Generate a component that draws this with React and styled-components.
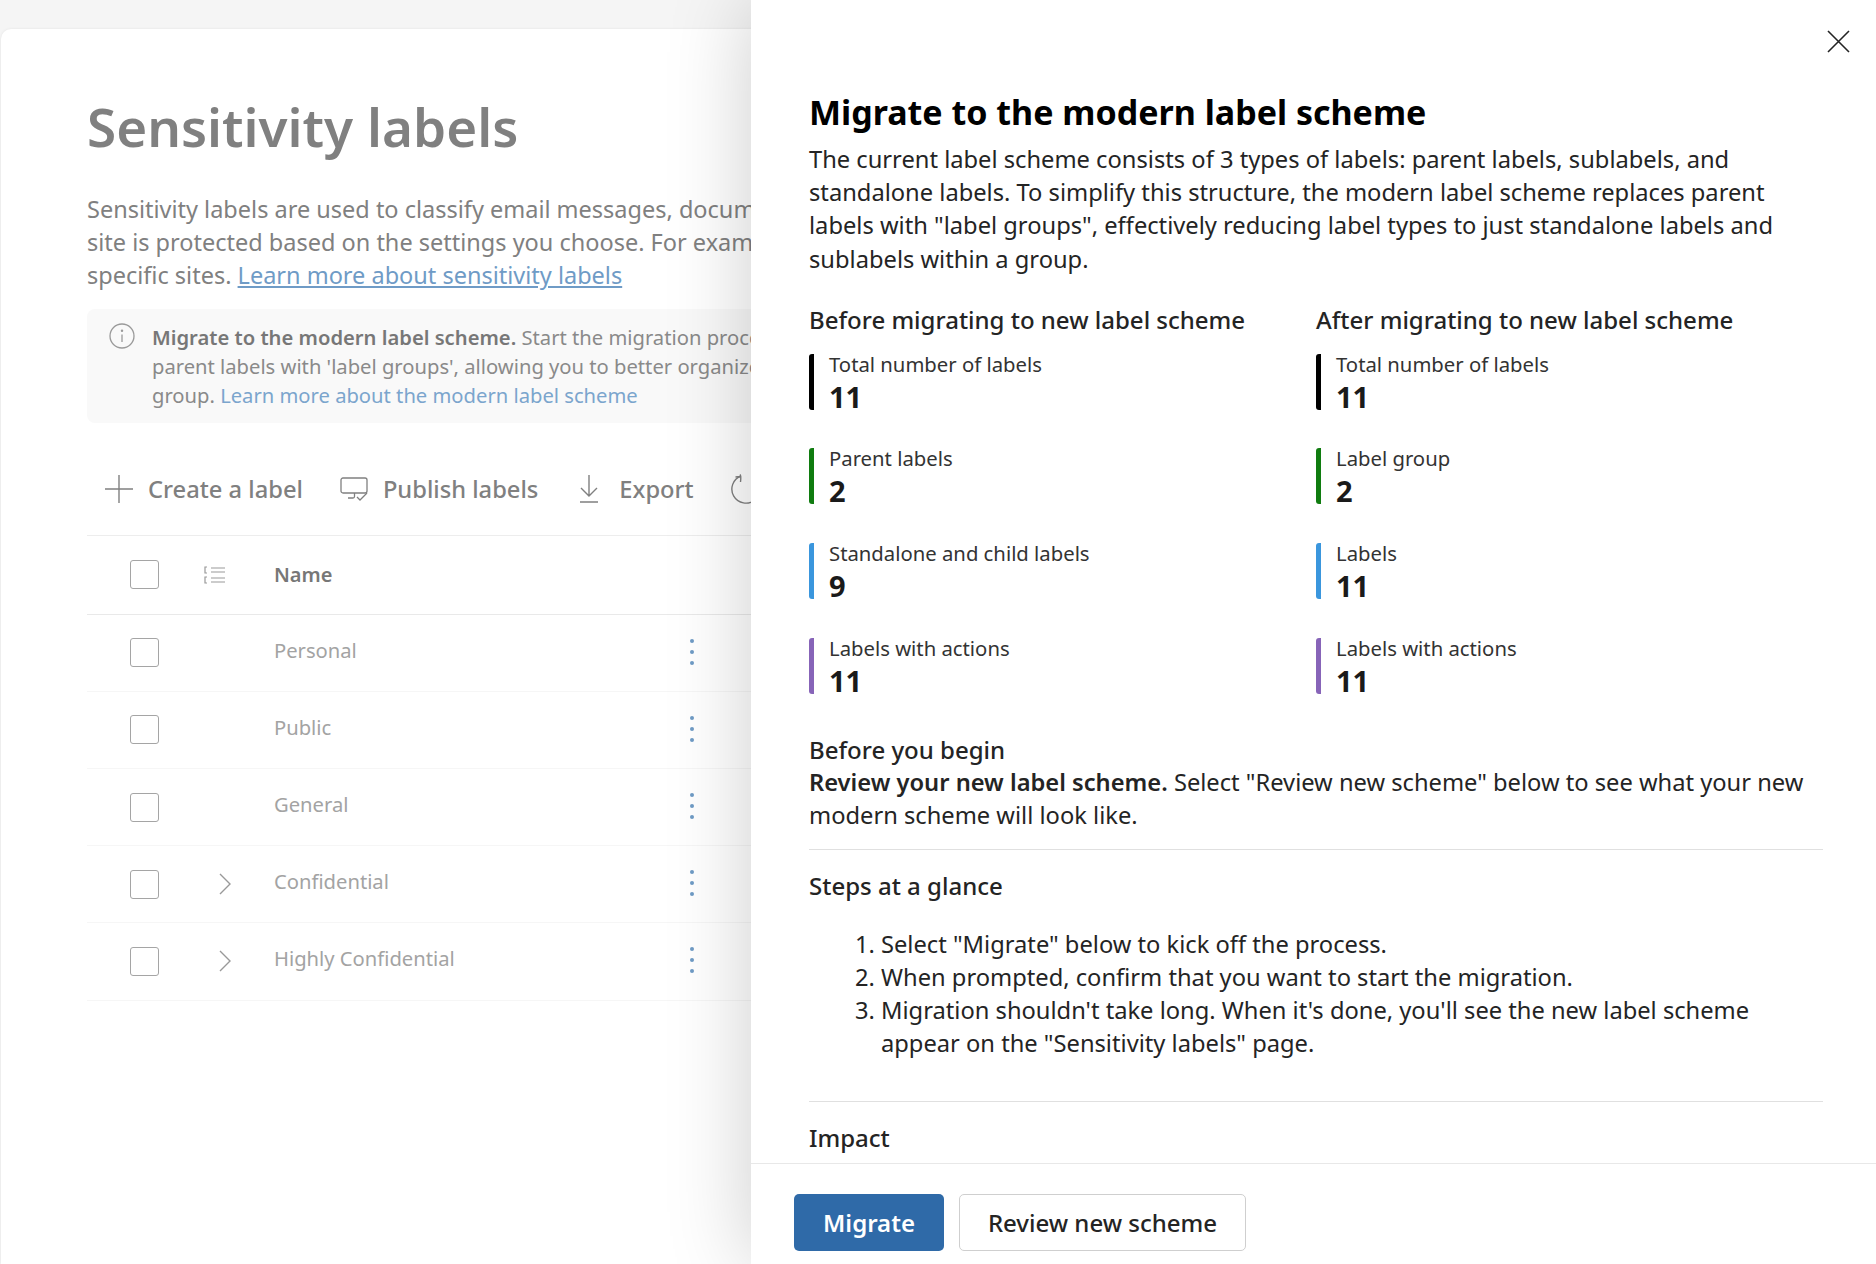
import React from 'react'
import styled, { createGlobalStyle } from 'styled-components'

const GlobalStyle = createGlobalStyle`
  html, body, #root { margin: 0; height: 100%; }
  body { background: #f5f5f5; font-family: "Noto Sans", "Open Sans", sans-serif; overflow: hidden; }
  * { box-sizing: border-box; }
`

const labelRows = [
  { name: 'Personal' },
  { name: 'Public' },
  { name: 'General' },
  { name: 'Confidential', expandable: true },
  { name: 'Highly Confidential', expandable: true },
]

const beforeStats = [
  { label: 'Total number of labels', value: 11, color: '#000000' },
  { label: 'Parent labels', value: 2, color: '#107c10' },
  { label: 'Standalone and child labels', value: 9, color: '#3a96dd' },
  { label: 'Labels with actions', value: 11, color: '#8764b8' },
]

const afterStats = [
  { label: 'Total number of labels', value: 11, color: '#000000' },
  { label: 'Label group', value: 2, color: '#107c10' },
  { label: 'Labels', value: 11, color: '#3a96dd' },
  { label: 'Labels with actions', value: 11, color: '#8764b8' },
]

const Stroke = ({ w, h, children, sw = 1.4 }) => (
  <svg width={w} height={h} viewBox={`0 0 ${w} ${h}`} fill="none" stroke="currentColor" strokeWidth={sw}>
    {children}
  </svg>
)

const App = () => (
  <>
    <GlobalStyle />
    <Page>
      <Behind>
        <Card>
          <Title>Sensitivity labels</Title>
          <Description>
            Sensitivity labels are used to classify email messages, documents<br />
            site is protected based on the settings you choose. For example<br />
            specific sites. <DescLink>Learn more about sensitivity labels</DescLink>
          </Description>
          <InfoBox>
            <InfoIcon>
              <Stroke w={26} h={26} sw={1.3}>
                <circle cx="13" cy="13" r="12" />
                <path d="M13 11.5v7.5" />
                <circle cx="13" cy="7.8" r="0.6" />
              </Stroke>
            </InfoIcon>
            <InfoText>
              <strong>Migrate to the modern label scheme.</strong> Start the migration process<br />
              parent labels with 'label groups', allowing you to better organize<br />
              group. <InfoLink>Learn more about the modern label scheme</InfoLink>
            </InfoText>
          </InfoBox>
          <Toolbar>
            <ToolButton>
              <Stroke w={28} h={28}><path d="M14 0v28M0 14h28" /></Stroke>
              Create a label
            </ToolButton>
            <ToolButton>
              <Stroke w={28} h={24} sw={1.3}>
                <rect x="1" y="1" width="26" height="15" rx="2" />
                <path d="M8 21h5c1 0 1.500-.8 1.500-1.500V16" />
                <path d="M17 20l3 3 7-7" />
              </Stroke>
              Publish labels
            </ToolButton>
            <ToolButton $gap={20} $lead={4}>
              <Stroke w={20} h={28}>
                <path d="M10 0v21M2 13l8 8 8-8M1 27h18" />
              </Stroke>
              Export
            </ToolButton>
            <RefreshIcon>
              <Stroke w={30} h={30}>
                <path d="M24 4.500A14 14 0 1 1 10 2" />
                <path d="M9 0.500c1 1.500 1 4 .5 7.500M9.500 2.500l-5 .5" />
              </Stroke>
            </RefreshIcon>
          </Toolbar>
          <HeaderRow>
            <CheckBox />
            <IconCell $offset={45}>
              <Stroke w={21} h={18} sw={1.2}>
                <path d="M7 2h14M7 6h14M7 12h14M7 16h14M3 1H1v6h2M3 11H1v6h2" />
              </Stroke>
            </IconCell>
            <HeaderName>Name</HeaderName>
          </HeaderRow>
          {labelRows.map((row) => (
            <LabelRow key={row.name}>
              <CheckBox />
              <IconCell $offset={60}>
                {row.expandable && (
                  <Stroke w={12} h={22} sw={1.4}>
                    <path d="M1 1l10 10L1 21" />
                  </Stroke>
                )}
              </IconCell>
              <RowName>{row.name}</RowName>
              <MoreDots><i /><i /><i /></MoreDots>
            </LabelRow>
          ))}
        </Card>
      </Behind>

      <Panel>
        <CloseButton aria-label="Close">
          <svg width="23" height="23" viewBox="0 0 23 23" fill="none" stroke="currentColor" strokeWidth="1.6">
            <path d="M1 1l21 21M22 1L1 22" />
          </svg>
        </CloseButton>
        <PanelBody>
          <PanelTitle>Migrate to the modern label scheme</PanelTitle>
          <Intro>
            The current label scheme consists of 3 types of labels: parent labels, sublabels, and standalone labels. To simplify this structure, the modern label scheme replaces parent labels with "label groups", effectively reducing label types to just standalone labels and sublabels within a group.
          </Intro>
          <Columns>
            <StatColumn heading="Before migrating to new label scheme" stats={beforeStats} />
            <StatColumn heading="After migrating to new label scheme" stats={afterStats} />
          </Columns>
          <BeginBlock>
            <SectionHead>Before you begin</SectionHead>
            <BodyText>
              <b>Review your new label scheme.</b> Select "Review new scheme" below to see what your new modern scheme will look like.
            </BodyText>
          </BeginBlock>
          <Divider />
          <SectionHead>Steps at a glance</SectionHead>
          <Steps>
            <li>Select "Migrate" below to kick off the process.</li>
            <li>When prompted, confirm that you want to start the migration.</li>
            <li>Migration shouldn't take long. When it's done, you'll see the new label scheme appear on the "Sensitivity labels" page.</li>
          </Steps>
          <Divider $gap={41} />
          <SectionHead>Impact</SectionHead>
        </PanelBody>
        <Footer>
          <PrimaryButton>Migrate</PrimaryButton>
          <SecondaryButton>Review new scheme</SecondaryButton>
        </Footer>
      </Panel>
    </Page>
  </>
)

const StatColumn = ({ heading, stats }) => (
  <div>
    <ColumnHead>{heading}</ColumnHead>
    <StatList>
      {stats.map((s) => (
        <Stat key={s.label} $color={s.color}>
          <StatLabel>{s.label}</StatLabel>
          <StatValue>{s.value}</StatValue>
        </Stat>
      ))}
    </StatList>
  </div>
)

export default App

const Page = styled.div`
  display: flex;
  width: 1876px;
  height: 1264px;
  overflow: hidden;
`
const Behind = styled.div`
  flex: 1;
  min-width: 0;
  overflow: hidden;
  padding: 29px 0 0 1px;
`
const Card = styled.div`
  width: 1000px;
  height: 100%;
  padding: 66px 0 0 86px;
  background: #fff;
  border-radius: 10px 0 0 0;
  box-shadow: 0 0 3px rgba(0, 0, 0, 0.08);
`
const Title = styled.h1`
  margin: 0;
  font-size: 53px;
  line-height: 64px;
  font-weight: 600;
  color: #808080;
  white-space: nowrap;
`
const Description = styled.p`
  margin: 34px 0 16px;
  font-size: 23.5px;
  line-height: 33.2px;
  color: #808080;
  white-space: nowrap;
`
const DescLink = styled.a`
  color: #6f9bc6;
  text-decoration: underline;
`
const InfoBox = styled.div`
  display: flex;
  gap: 17px;
  height: 114px;
  padding: 14px 0 0 22px;
  background: #f9f9f9;
  border-radius: 8px;
`
const InfoIcon = styled.span`
  color: #9a9a9a;
  line-height: 0;
`
const InfoText = styled.div`
  font-size: 20.2px;
  line-height: 29px;
  color: #8a8a8a;
  white-space: nowrap;
  strong {
    font-weight: 600;
    color: #777;
  }
`
const InfoLink = styled.a`
  color: #7ba5cd;
`
const Toolbar = styled.div`
  display: flex;
  align-items: center;
  gap: 37px;
  height: 113px;
  padding: 21px 0 0 18px;
  border-bottom: 1px solid #ededed;
`
const ToolButton = styled.div`
  display: flex;
  align-items: center;
  gap: ${(p) => p.$gap || 15}px;
  margin-left: ${(p) => p.$lead || 0}px;
  font-size: 23.7px;
  font-weight: 500;
  color: #808080;
  white-space: nowrap;
`
const RefreshIcon = styled.span`
  display: flex;
  color: #808080;
`
const RowBase = styled.div`
  display: grid;
  grid-template-columns: 29px 115px 413px 10px;
  align-items: center;
  padding-left: 43px;
`
const HeaderRow = styled(RowBase)`
  height: 79px;
  border-bottom: 1px solid #e9e9e9;
`
const LabelRow = styled(RowBase)`
  height: 77.2px;
  border-bottom: 1px solid #f6f6f6;
`
const CheckBox = styled.span`
  display: block;
  width: 29px;
  height: 29px;
  border: 1.5px solid #a5a5a5;
  border-radius: 3px;
  background: #fff;
`
const IconCell = styled.span`
  display: flex;
  padding-left: ${(p) => p.$offset}px;
  color: #999;
`
const HeaderName = styled.span`
  font-size: 20px;
  font-weight: 600;
  color: #777;
`
const RowName = styled.span`
  font-size: 20.2px;
  color: #a3a3a3;
  margin-top: -6px;
`
const MoreDots = styled.span`
  display: flex;
  flex-direction: column;
  align-items: center;
  gap: 7px;
  margin-top: -2px;
  i {
    width: 4px;
    height: 4px;
    border-radius: 50%;
    background: #6f9bc6;
  }
`
const Panel = styled.aside`
  position: relative;
  z-index: 1;
  flex: none;
  display: flex;
  flex-direction: column;
  width: 1125px;
  height: 1264px;
  background: #fff;
  box-shadow: 0 0 80px rgba(0, 0, 0, 0.2);
`
const CloseButton = styled.button`
  position: absolute;
  top: 30px;
  right: 26px;
  padding: 0;
  border: 0;
  background: none;
  color: #242424;
  line-height: 0;
`
const PanelBody = styled.div`
  flex: 1;
  min-height: 0;
  overflow: hidden;
  padding: 90px 53px 0 58px;
  color: #242424;
`
const PanelTitle = styled.h2`
  margin: 0 0 9px;
  font-size: 34px;
  line-height: 44px;
  font-weight: 700;
  color: #000;
`
const BodyText = styled.p`
  margin: 0;
  font-size: 23.7px;
  line-height: 33.2px;
  b {
    font-weight: 600;
  }
`
const Intro = styled(BodyText)``
const Columns = styled.div`
  display: grid;
  grid-template-columns: 507px 1fr;
  margin-top: 27px;
`
const ColumnHead = styled.div`
  font-size: 24px;
  line-height: 33px;
  font-weight: 500;
  white-space: nowrap;
`
const StatList = styled.div`
  display: flex;
  flex-direction: column;
  gap: 38.6px;
  margin-top: 18px;
`
const Stat = styled.div`
  height: 56px;
  padding-left: 15px;
  border-left: 5px solid ${(p) => p.$color};
  border-radius: 3px;
`
const StatLabel = styled.div`
  margin-top: -1px;
  font-size: 20.3px;
  line-height: 22px;
  color: #333;
`
const StatValue = styled.div`
  margin-top: 8px;
  font-size: 29px;
  line-height: 28px;
  font-weight: 700;
  color: #1a1a1a;
`
const BeginBlock = styled.div`
  margin-top: 39.5px;
`
const SectionHead = styled.div`
  font-size: 24px;
  line-height: 33px;
  font-weight: 500;
`
const Divider = styled.hr`
  height: 1px;
  margin: ${(p) => p.$gap || 16}px 0 19px;
  border: 0;
  background: #e0e0e0;
`
const Steps = styled.ol`
  margin: 26px 0 0;
  padding-left: 72px;
  font-size: 23.7px;
  line-height: 33.2px;
`
const Footer = styled.div`
  flex: none;
  display: flex;
  gap: 15px;
  height: 101px;
  padding: 30px 0 0 43px;
  border-top: 1px solid #e8e8e8;
`
const PrimaryButton = styled.button`
  width: 150px;
  height: 57px;
  border: 0;
  border-radius: 5px;
  background: #2f6aa8;
  color: #fff;
  font: 600 24px "Noto Sans", sans-serif;
`
const SecondaryButton = styled.button`
  width: 287px;
  height: 57px;
  border: 1px solid #cfcfcf;
  border-radius: 5px;
  background: #fff;
  color: #242424;
  font: 500 24px "Noto Sans", sans-serif;
`
